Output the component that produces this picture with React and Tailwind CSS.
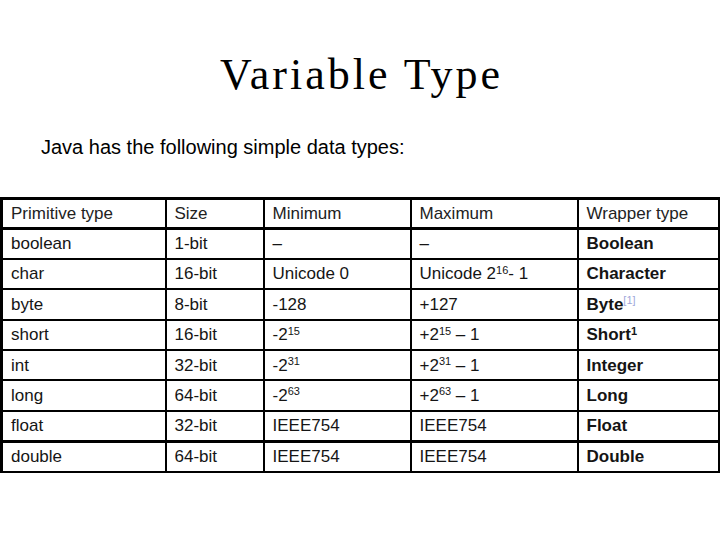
const rows = [
  { type: "boolean", size: "1-bit", min: "–", max: "–", wrap: "Boolean" },
  { type: "char", size: "16-bit", min: "Unicode 0", max: <>Unicode 2<sup className="text-[11px]">16</sup>- 1</>, wrap: "Character" },
  { type: "byte", size: "8-bit", min: "-128", max: "+127", wrap: <>Byte<sup className="text-[11px] text-[#9fa8da] font-normal">[1]</sup></> },
  { type: "short", size: "16-bit", min: <>-2<sup className="text-[11px]">15</sup></>, max: <>+2<sup className="text-[11px]">15</sup> – 1</>, wrap: <>Short<sup className="text-[11px]">1</sup></> },
  { type: "int", size: "32-bit", min: <>-2<sup className="text-[11px]">31</sup></>, max: <>+2<sup className="text-[11px]">31</sup> – 1</>, wrap: "Integer" },
  { type: "long", size: "64-bit", min: <>-2<sup className="text-[11px]">63</sup></>, max: <>+2<sup className="text-[11px]">63</sup> – 1</>, wrap: "Long" },
  { type: "float", size: "32-bit", min: "IEEE754", max: "IEEE754", wrap: "Float", thick: true },
  { type: "double", size: "64-bit", min: "IEEE754", max: "IEEE754", wrap: "Double" },
];

export default function App() {
  const cell = "border-r-2 border-black pl-2 align-middle";
  return (
    <div className="w-[720px] h-[540px] bg-white overflow-hidden font-['Liberation_Sans',Arial,sans-serif]">
      <h1 className="pt-[53px] pl-[3px] text-center text-[44px] leading-none tracking-[3px] font-normal text-black font-['Liberation_Serif','Times_New_Roman',serif]">
        Variable Type
      </h1>
      <p className="mt-[40px] pl-[41px] text-[20px] leading-none text-black">
        Java has the following simple data types:
      </p>
      <table className="mt-[40px] w-[718px] table-fixed border-collapse border-t-[3px] border-l-[3px] border-r-[3px] border-black text-[17px] text-[#151515]">
        <colgroup>
          <col className="w-[164px]" />
          <col className="w-[98px]" />
          <col className="w-[147px]" />
          <col className="w-[167px]" />
          <col className="w-[142px]" />
        </colgroup>
        <thead>
          <tr className="h-[30px] border-b-[3px] border-black text-left text-[#222]">
            <th className={cell + " font-normal"}>Primitive type</th>
            <th className={cell + " font-normal"}>Size</th>
            <th className={cell + " font-normal"}>Minimum</th>
            <th className={cell + " font-normal"}>Maximum</th>
            <th className="pl-2 font-normal border-r-[3px] border-black">Wrapper type</th>
          </tr>
        </thead>
        <tbody>
          {rows.map((r) => (
            <tr
              key={r.type}
              className={
                "h-[30.4px] border-black " + (r.thick ? "border-b-[3px]" : "border-b-2")
              }
            >
              <td className={cell}>{r.type}</td>
              <td className={cell}>{r.size}</td>
              <td className={cell}>{r.min}</td>
              <td className={cell}>{r.max}</td>
              <td className="pl-2 font-bold border-r-[3px] border-black">{r.wrap}</td>
            </tr>
          ))}
        </tbody>
      </table>
    </div>
  );
}
